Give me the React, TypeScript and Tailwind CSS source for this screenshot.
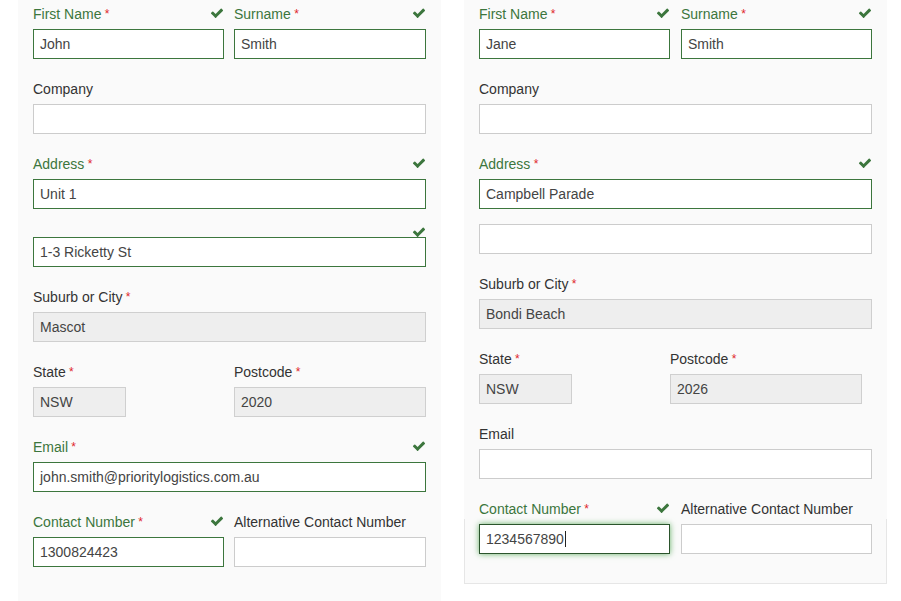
import React from "react";

const FONT = { fontFamily: '"Liberation Sans", Arial, sans-serif' };

function Check() {
  return (
    <svg viewBox="0 0 1792 1792" className="w-[14px] h-[14px] block" fill="#3c763d">
      <path d="M1671 566q0 40-28 68l-724 724-136 136q-28 28-68 28t-68-28l-136-136-362-362q-28-28-28-68t28-68l136-136q28-28 68-28t68 28l294 295 656-657q28-28 68-28t68 28l136 136q28 28 28 68z" />
    </svg>
  );
}

type Variant = "success" | "default" | "readonly" | "focus";

function Label({ text, required, success, check, noMargin }: { text: string; required?: boolean; success?: boolean; check?: boolean; noMargin?: boolean }) {
  return (
    <div className={`h-[20px] ${noMargin ? "" : "mb-[5px]"} flex items-center justify-between text-[14px] leading-[20px]`}>
      <span className={success ? "text-[#3c763d]" : "text-[#333]"}>
        {text}
        {required && <span className="text-[#e0262b] text-[12px] relative top-[-1px]"> *</span>}
      </span>
      {check && (
        <span className="relative top-[-1px]">
          <Check />
        </span>
      )}
    </div>
  );
}

function Input({ value, variant = "default", className = "", caret }: { value?: string; variant?: Variant; className?: string; caret?: boolean }) {
  const v =
    variant === "success"
      ? "border-[#3c763d] bg-white"
      : variant === "readonly"
      ? "border-[#cfcfcf] bg-[#eeeeee]"
      : variant === "focus"
      ? "border-[#2b542c] bg-white shadow-[0_0_6px_#67b168]"
      : "border-[#cccccc] bg-white";
  return (
    <div className={`h-[30px] border ${v} pl-[6px] flex items-center text-[14px] text-[#444] ${className}`}>
      {value}
      {caret && <span className="inline-block w-[1px] h-[16px] bg-[#222] ml-[1px]" />}
    </div>
  );
}

export default function App() {
  return (
    <div className="w-[901px] h-[601px] overflow-hidden bg-white flex" style={FONT}>
      {/* Left panel */}
      <div className="ml-[18px] w-[423px] h-[601px] bg-[#fafafa] px-[15px] pt-[4px]">
        <div className="grid grid-cols-[191px_192px] gap-x-[10px] mb-[20px]">
          <div>
            <Label text="First Name" required success check />
            <Input value="John" variant="success" />
          </div>
          <div>
            <Label text="Surname" required success check />
            <Input value="Smith" variant="success" />
          </div>
        </div>
        <div className="mb-[20px]">
          <Label text="Company" />
          <Input />
        </div>
        <div className="mb-[20px]">
          <Label text="Address" required success check />
          <Input value="Unit 1" variant="success" />
          <div className="relative mt-[28px]">
            <div className="absolute right-0 top-[-12px]">
              <Check />
            </div>
            <Input value="1-3 Ricketty St" variant="success" />
          </div>
        </div>
        <div className="mb-[20px]">
          <Label text="Suburb or City" required />
          <Input value="Mascot" variant="readonly" />
        </div>
        <div className="grid grid-cols-[191px_192px] gap-x-[10px] mb-[20px]">
          <div>
            <Label text="State" required />
            <Input value="NSW" variant="readonly" className="w-[93px]" />
          </div>
          <div>
            <Label text="Postcode" required />
            <Input value="2020" variant="readonly" />
          </div>
        </div>
        <div className="mb-[20px]">
          <Label text="Email" required success check />
          <Input value="john.smith@prioritylogistics.com.au" variant="success" />
        </div>
        <div className="grid grid-cols-[191px_192px] gap-x-[10px]">
          <div>
            <Label text="Contact Number" required success check />
            <Input value="1300824423" variant="success" />
          </div>
          <div>
            <Label text="Alternative Contact Number" />
            <Input />
          </div>
        </div>
      </div>

      {/* Right panel */}
      <div className="ml-[23px] w-[423px] h-[584px] bg-[#fafafa] flex flex-col">
        <div className="px-[15px] pt-[4px]">
          <div className="grid grid-cols-[191px_191px] gap-x-[11px] mb-[20px]">
            <div>
              <Label text="First Name" required success check />
              <Input value="Jane" variant="success" />
            </div>
            <div>
              <Label text="Surname" required success check />
              <Input value="Smith" variant="success" />
            </div>
          </div>
          <div className="mb-[20px]">
            <Label text="Company" />
            <Input />
          </div>
          <div className="mb-[20px]">
            <Label text="Address" required success check />
            <Input value="Campbell Parade" variant="success" />
            <div className="mt-[15px]">
              <Input />
            </div>
          </div>
          <div className="mb-[20px]">
            <Label text="Suburb or City" required />
            <Input value="Bondi Beach" variant="readonly" />
          </div>
          <div className="grid grid-cols-[191px_192px] mb-[20px]">
            <div>
              <Label text="State" required />
              <Input value="NSW" variant="readonly" className="w-[93px]" />
            </div>
            <div>
              <Label text="Postcode" required />
              <Input value="2026" variant="readonly" />
            </div>
          </div>
          <div className="mb-[20px]">
            <Label text="Email" />
            <Input />
          </div>
          <div className="grid grid-cols-[191px_191px] gap-x-[11px]">
            <Label text="Contact Number" required success check noMargin />
            <Label text="Alternative Contact Number" noMargin />
          </div>
        </div>
        <div className="flex-1 border-x border-b border-[#e6e6e6] px-[14px] pt-[5px]">
          <div className="grid grid-cols-[191px_191px] gap-x-[11px]">
            <Input value="1234567890" variant="focus" caret />
            <Input />
          </div>
        </div>
      </div>
    </div>
  );
}
